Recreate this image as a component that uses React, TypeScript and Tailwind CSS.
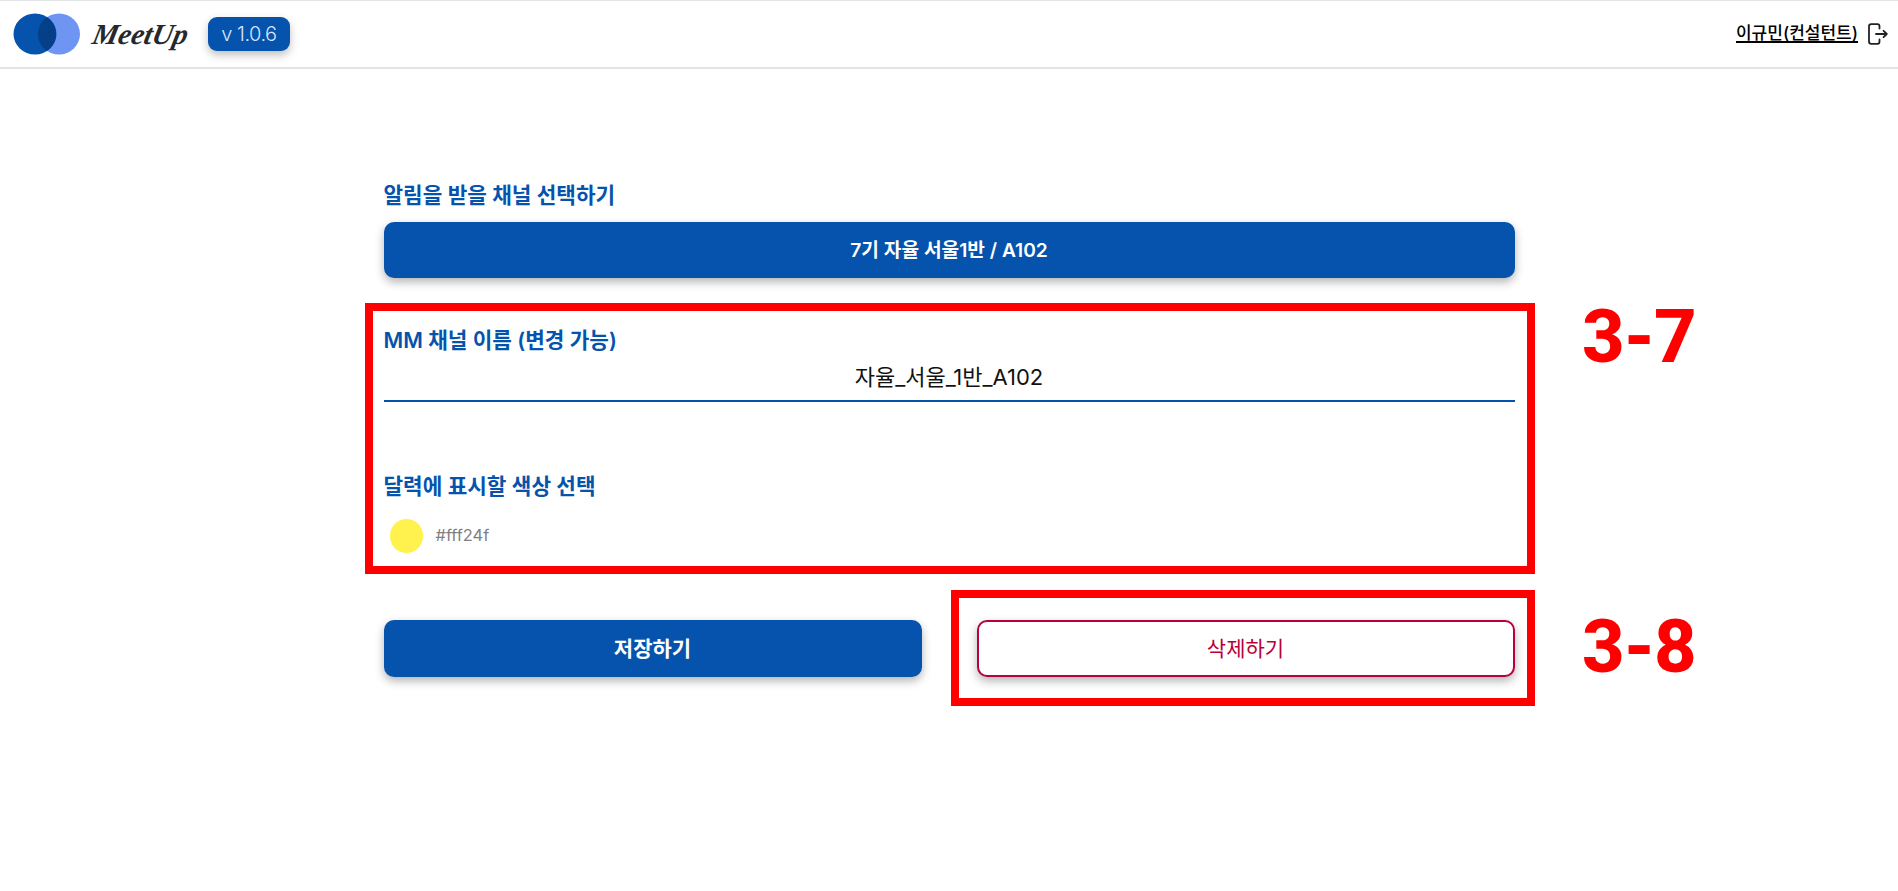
const sans = "font-['Inter','Noto_Sans_CJK_KR',sans-serif]";

function Logo() {
  return (
    <svg width="68" height="42" viewBox="0 0 68 42" className="shrink-0">
      <ellipse cx="46" cy="21" rx="21" ry="20.5" fill="#6f95f3" />
      <ellipse cx="22" cy="21" rx="21.5" ry="20.5" fill="#0553ac" />
      <path d="M34 4.2 C39.5 8 43 14 43 21 C43 28 39.5 34 34 37.8 C28.5 34 25 28 25 21 C25 14 28.5 8 34 4.2 Z" fill="#043f88" />
    </svg>
  );
}

function LogoutIcon() {
  return (
    <svg width="20" height="22" viewBox="0 0 20 22" fill="none" stroke="#222" strokeWidth="1.8" strokeLinecap="round" strokeLinejoin="round">
      <path d="M11.5 5.5V3.5C11.5 2.2 10.8 1.2 9.5 1.2H3.2C1.9 1.2 1 2.2 1 3.5V18.5C1 19.8 1.9 20.8 3.2 20.8H9.5C10.8 20.8 11.5 19.8 11.5 18.5V16.5" />
      <path d="M8 11H18.8M15.6 7.8L18.8 11L15.6 14.2" />
    </svg>
  );
}

function Header() {
  return (
    <header className="flex h-[69px] items-center justify-between border-y-2 border-t-[1px] border-[#e2e5e8] bg-white pl-[13px] pr-[10px]">
      <div className="flex items-center">
        <Logo />
        <span className="ml-[12px] w-[96px] -skew-x-12 font-['Liberation_Serif',serif] text-[29px] leading-none font-bold italic text-[#26282b]">
          MeetUp
        </span>
        <span className="ml-[19px] flex h-[34px] w-[82px] items-center justify-center rounded-[9px] bg-[#0553ac] text-[20px] font-light tracking-tight text-[#d8e6fb] shadow-[0_4px_8px_rgba(0,0,0,0.25)]">
          v 1.0.6
        </span>
      </div>
      <div className="flex items-center gap-[10px]">
        <span className="text-[17px] font-medium text-black underline decoration-[1.5px] underline-offset-2">이규민(컨설턴트)</span>
        <LogoutIcon />
      </div>
    </header>
  );
}

function Heading({ children }: { children: string }) {
  return <h2 className="text-[21.3px] leading-[30px] font-semibold text-[#0553ac]">{children}</h2>;
}

const shadow = "shadow-[0_4px_10px_rgba(0,0,0,0.3)]";
const buttonBase = `flex h-[57px] w-[538px] items-center justify-center rounded-[10px] ${shadow}`;

export default function App() {
  return (
    <div className={`relative min-h-[891px] bg-white ${sans}`}>
      <Header />
      <main className="mx-auto flex w-[1131px] flex-col pt-[111px]">
        <Heading>알림을 받을 채널 선택하기</Heading>
        <button type="button" className={`mt-[12px] flex h-[56px] w-full items-center justify-center rounded-[10px] bg-[#0553ac] text-[19.2px] font-semibold text-white ${shadow}`}>
          7기 자율 서울1반 / A102
        </button>

        <div className="mt-[47px]">
          <Heading>MM 채널 이름 (변경 가능)</Heading>
        </div>
        <div className="mt-[8px] flex h-[39px] items-center justify-center border-b-2 border-[#0553ac] pb-[8px] text-[22px] text-[#111]">
          자율_서울_1반_A102
        </div>

        <div className="mt-[69px]">
          <Heading>달력에 표시할 색상 선택</Heading>
        </div>
        <div className="mt-[18px] flex items-center pl-[6px]">
          <span className="h-[34px] w-[33px] rounded-full bg-[#fff24f]" />
          <span className="ml-[13px] text-[16.4px] leading-[30px] -translate-y-px text-[#808080]">#fff24f</span>
        </div>

        <div className="mt-[67px] flex justify-between">
          <button type="button" className={`${buttonBase} bg-[#0553ac] text-[21px] font-semibold text-white`}>
            저장하기
          </button>
          <button type="button" className={`${buttonBase} border-2 border-[#b8003a] bg-white text-[21px] text-[#b8003a]`}>
            삭제하기
          </button>
        </div>
      </main>

      {/* annotations drawn over the page */}
      <div className="absolute top-[303px] left-[365px] h-[271px] w-[1170px] border-8 border-[#ff0000]" />
      <div className="absolute top-[590px] left-[951px] h-[116px] w-[584px] border-8 border-[#ff0000]" />
      <span className="absolute top-[292px] left-[1582px] font-['Roboto',sans-serif] text-[74px] leading-[90px] font-extrabold tracking-[-1px] text-[#ff0000]">3-7</span>
      <span className="absolute top-[602px] left-[1582px] font-['Roboto',sans-serif] text-[74px] leading-[90px] font-extrabold tracking-[-1px] text-[#ff0000]">3-8</span>
    </div>
  );
}
